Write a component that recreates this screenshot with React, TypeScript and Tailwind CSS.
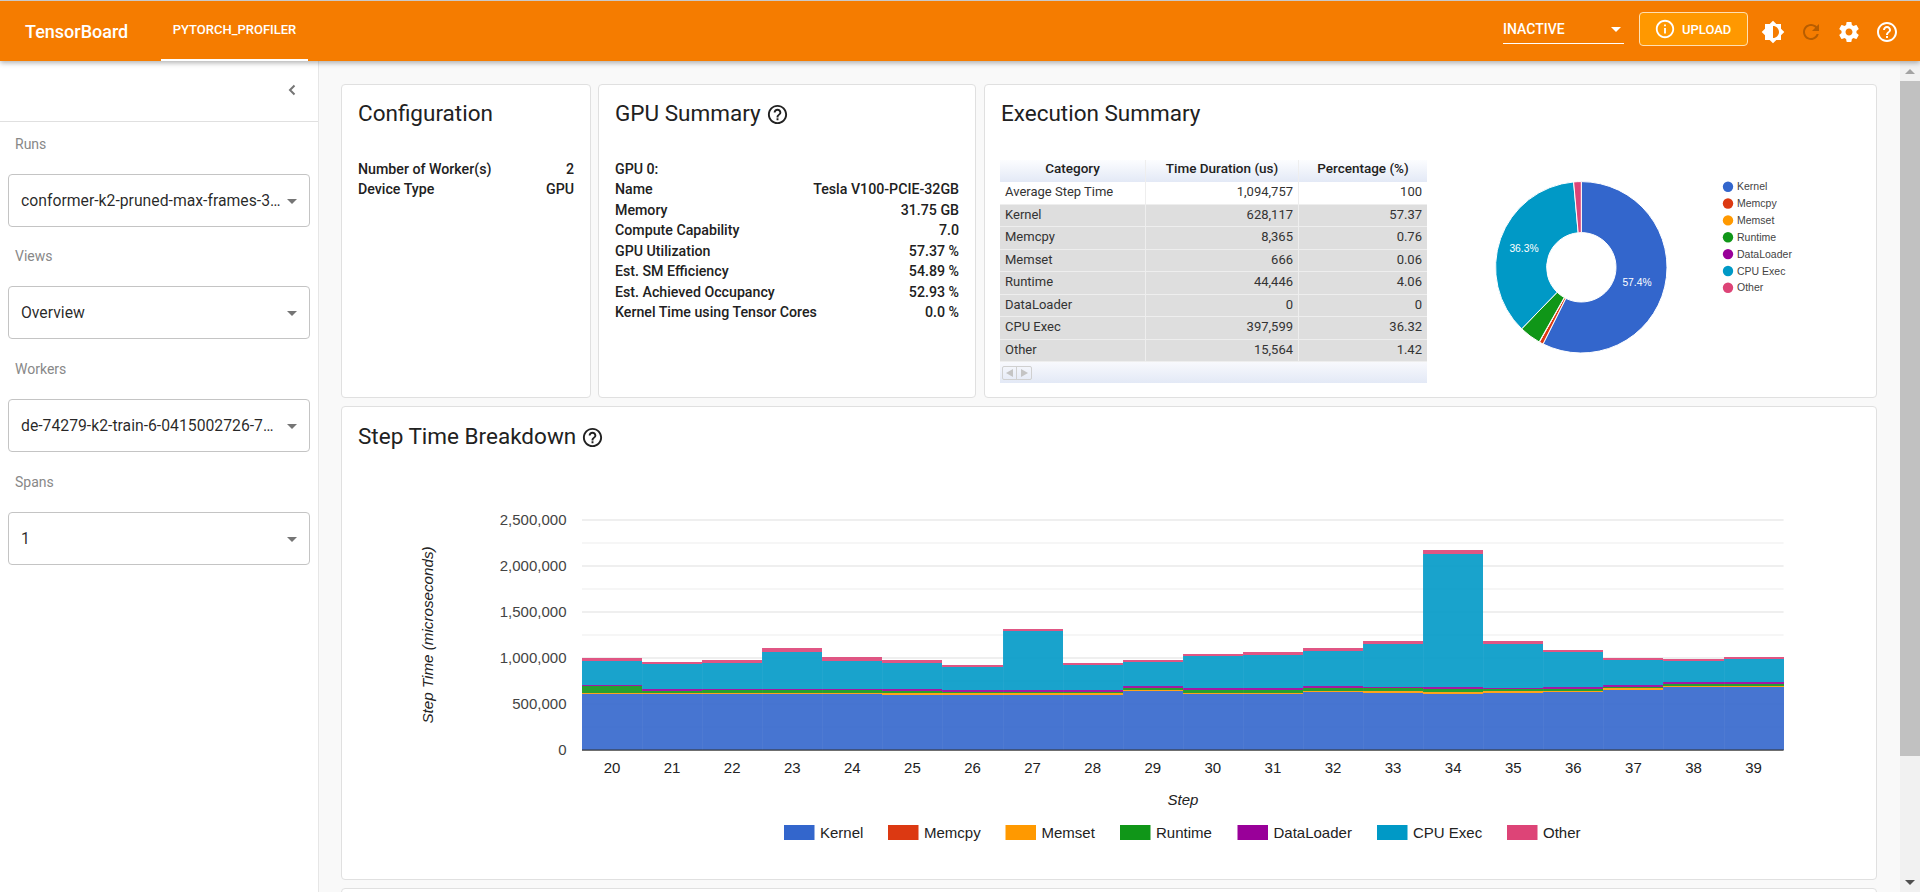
import React from "react";

const roboto = "font-['Roboto',sans-serif]";

const HELP_PATH =
  "M11 18h2v-2h-2v2zm1-16C6.48 2 2 6.48 2 12s4.48 10 10 10 10-4.48 10-10S17.52 2 12 2zm0 18c-4.41 0-8-3.59-8-8s3.59-8 8-8 8 3.59 8 8-3.59 8-8 8zm0-14c-2.21 0-4 1.79-4 4h2c0-1.1.9-2 2-2s2 .9 2 2c0 2-3 1.75-3 5h2c0-2.25 3-2.5 3-5 0-2.21-1.79-4-4-4z";

function MatIcon({ d, className }: { d: string; className?: string }) {
  return (
    <svg viewBox="0 0 24 24" className={className} fill="currentColor">
      <path d={d} />
    </svg>
  );
}

const seriesColors: Record<string, string> = {
  Kernel: "#3366cc",
  Memcpy: "#dc3912",
  Memset: "#ff9900",
  Runtime: "#109618",
  DataLoader: "#990099",
  "CPU Exec": "#0099c6",
  Other: "#dd4477",
};

function Header() {
  return (
    <header className="relative z-10 flex h-[61px] shrink-0 items-stretch border-t border-[#c9c9c9] bg-[#f57c00] text-white shadow-[0_2px_5px_rgba(0,0,0,0.3)]">
      <div className={`${roboto} ml-[25px] flex w-[136px] items-center text-[18px] font-medium`}>
        TensorBoard
      </div>
      <div className={`${roboto} flex w-[147px] items-center justify-center border-b-2 border-white text-[13px] font-medium`}>
        PYTORCH_PROFILER
      </div>
      <div className="ml-auto flex items-start pr-[14px]">
        <div className={`${roboto} relative mr-[15px] mt-[13px] flex h-[30px] w-[121px] items-center border-b border-white pt-[2px] text-[14px] font-medium`}>
          INACTIVE
          <span className="absolute right-[3px] top-[13px] h-0 w-0 border-x-[5px] border-t-[5px] border-x-transparent border-t-white" />
        </div>
        <button className={`${roboto} mt-[11px] flex h-[34px] w-[109px] items-center rounded-[4px] border border-[#ffe0b2] bg-[#ff9800] pl-[14px] text-[13px] font-medium`}>
          <MatIcon
            className="mr-[6px] h-[22px] w-[22px]"
            d="M11 7h2v2h-2zm0 4h2v6h-2zm1-9C6.48 2 2 6.48 2 12s4.48 10 10 10 10-4.48 10-10S17.52 2 12 2zm0 18c-4.41 0-8-3.59-8-8s3.59-8 8-8 8 3.59 8 8-3.59 8-8 8z"
          />
          <span className="pt-[1px]">UPLOAD</span>
        </button>
        <div className="ml-[6px] mt-[19px] flex">
          <div className="flex w-[38px] justify-center">
            <MatIcon
              className="h-6 w-6"
              d="M20 15.31L23.31 12 20 8.69V4h-4.69L12 .69 8.69 4H4v4.69L.69 12 4 15.31V20h4.69L12 23.31 15.31 20H20v-4.69zM12 18V6c3.31 0 6 2.69 6 6s-2.69 6-6 6z"
            />
          </div>
          <div className="flex w-[38px] justify-center text-black/25">
            <MatIcon
              className="h-6 w-6"
              d="M17.65 6.35C16.2 4.9 14.21 4 12 4c-4.42 0-7.99 3.58-7.99 8s3.57 8 7.99 8c3.73 0 6.84-2.55 7.73-6h-2.08c-.82 2.33-3.04 4-5.65 4-3.31 0-6-2.69-6-6s2.69-6 6-6c1.66 0 3.14.69 4.22 1.78L13 11h7V4l-2.35 2.35z"
            />
          </div>
          <div className="flex w-[38px] justify-center">
            <MatIcon
              className="h-6 w-6"
              d="M19.43 12.98c.04-.32.07-.64.07-.98s-.03-.66-.07-.98l2.11-1.65c.19-.15.24-.42.12-.64l-2-3.46c-.12-.22-.39-.3-.61-.22l-2.49 1c-.52-.4-1.08-.73-1.69-.98l-.38-2.65C14.46 2.18 14.25 2 14 2h-4c-.25 0-.46.18-.49.42l-.38 2.65c-.61.25-1.17.59-1.69.98l-2.49-1c-.23-.09-.49 0-.61.22l-2 3.46c-.13.22-.07.49.12.64l2.11 1.65c-.04.32-.07.65-.07.98s.03.66.07.98l-2.11 1.65c-.19.15-.24.42-.12.64l2 3.46c.12.22.39.3.61.22l2.49-1c.52.4 1.08.73 1.69.98l.38 2.65c.03.24.24.42.49.42h4c.25 0 .46-.18.49-.42l.38-2.65c.61-.25 1.17-.59 1.69-.98l2.49 1c.23.09.49 0 .61-.22l2-3.46c.12-.22.07-.49-.12-.64l-2.11-1.65zM12 15.5c-1.93 0-3.5-1.57-3.5-3.5s1.57-3.5 3.5-3.5 3.5 1.57 3.5 3.5-1.57 3.5-3.5 3.5z"
            />
          </div>
          <div className="flex w-[38px] justify-center">
            <MatIcon className="h-6 w-6" d={HELP_PATH} />
          </div>
        </div>
      </div>
    </header>
  );
}

function SelectBox({ label, value }: { label: string; value: string }) {
  return (
    <div className="h-[113px]">
      <div className={`${roboto} flex h-[60px] items-center pl-[7px] text-[14px] text-[#888]`}>{label}</div>
      <div className={`${roboto} relative flex h-[53px] items-center rounded-[4px] border border-[#c4c4c4] pl-[12px] text-[15.75px] text-black/85`}>
        <span className="whitespace-nowrap">{value}</span>
        <span className="absolute right-[12px] top-[24px] h-0 w-0 border-x-[5px] border-t-[5px] border-x-transparent border-t-[#757575]" />
      </div>
    </div>
  );
}

function Sidebar() {
  return (
    <aside className="w-[319px] shrink-0 border-r border-[#e6e6e6] bg-white">
      <div className="flex h-[61px] items-center justify-end border-b border-[#e0e0e0] pr-[20px] pb-[2px] text-[#757575]">
        <svg viewBox="0 0 12 12" className="h-3 w-3" fill="none" stroke="currentColor" strokeWidth="2">
          <path d="M8.5 1.5L4 6l4.5 4.5" />
        </svg>
      </div>
      <div className="-mt-[8px] px-[8px]">
        <SelectBox label="Runs" value="conformer-k2-pruned-max-frames-3…" />
        <div className="-mt-[1px]">
          <SelectBox label="Views" value="Overview" />
        </div>
        <SelectBox label="Workers" value="de-74279-k2-train-6-0415002726-7…" />
        <SelectBox label="Spans" value="1" />
      </div>
    </aside>
  );
}

function Card({ title, help, className, children }: { title: string; help?: boolean; className?: string; children: React.ReactNode }) {
  return (
    <section className={`rounded-[4px] border border-[#e0e0e0] bg-white ${className || ""}`}>
      <h2 className={`${roboto} flex h-[32px] items-center pl-[16px] text-[22.5px] font-normal text-[#212121]`}>
        {title}
        {help && <MatIcon className="ml-[5px] h-[23px] w-[23px] text-[#212121]" d={HELP_PATH} />}
      </h2>
      {children}
    </section>
  );
}

function KV({ k, v }: { k: string; v?: string }) {
  return (
    <div className={`${roboto} flex h-[20.5px] items-center justify-between text-[14.2px] font-medium text-[#212121]`}>
      <span>{k}</span>
      {v && <span>{v}</span>}
    </div>
  );
}

const execRows = [
  ["Average Step Time", "1,094,757", "100"],
  ["Kernel", "628,117", "57.37"],
  ["Memcpy", "8,365", "0.76"],
  ["Memset", "666", "0.06"],
  ["Runtime", "44,446", "4.06"],
  ["DataLoader", "0", "0"],
  ["CPU Exec", "397,599", "36.32"],
  ["Other", "15,564", "1.42"],
];

function ExecTable() {
  return (
    <div className={`${roboto} w-[427px] shrink-0 text-[13px] text-[#333]`}>
      <div className="grid h-[22px] grid-cols-[146px_153px_128px] bg-gradient-to-b from-[#fcfdff] to-[#e3e9f6] text-center text-[13.5px] font-medium text-[#212121]">
        <div className="border-r border-[#eeeeee] leading-[16px]">Category</div>
        <div className="border-r border-[#eeeeee] leading-[16px]">Time Duration (us)</div>
        <div className="leading-[16px]">Percentage (%)</div>
      </div>
      {execRows.map((row, i) => (
        <div
          key={row[0]}
          className={`grid h-[22.5px] grid-cols-[146px_153px_128px] border-b border-[#eeeeee] leading-[20px] ${i === 0 ? "bg-white" : "bg-[#dedede]"}`}
        >
          <div className="border-r border-[#eeeeee] pl-[5px]">{row[0]}</div>
          <div className="border-r border-[#eeeeee] pr-[5px] text-right">{row[1]}</div>
          <div className="pr-[5px] text-right">{row[2]}</div>
        </div>
      ))}
      <div className="flex h-[21px] items-center bg-gradient-to-b from-[#f8f9fd] to-[#e3e9f6] pl-[2px]">
        <div className="flex h-[14px] w-[30px] rounded-[2px] border border-[#d0d0d0]">
          <div className="flex w-1/2 items-center justify-center border-r border-[#d0d0d0]">
            <span className="h-0 w-0 border-y-[4px] border-r-[7px] border-y-transparent border-r-[#c4c4c4]" />
          </div>
          <div className="flex w-1/2 items-center justify-center">
            <span className="h-0 w-0 border-y-[4px] border-l-[7px] border-y-transparent border-l-[#c4c4c4]" />
          </div>
        </div>
      </div>
    </div>
  );
}

const pieData: [string, number][] = [
  ["Kernel", 57.37],
  ["Memcpy", 0.76],
  ["Memset", 0.06],
  ["Runtime", 4.06],
  ["DataLoader", 0],
  ["CPU Exec", 36.32],
  ["Other", 1.43],
];

function Donut() {
  const cx = 1581.3;
  const cy = 267.3;
  const R = 85.7;
  const r = 34.7;
  let acc = 0;
  const pt = (rad: number, pct: number) => {
    const a = (pct / 100) * Math.PI * 2;
    return `${cx + rad * Math.sin(a)} ${cy - rad * Math.cos(a)}`;
  };
  return (
    <svg className="-mt-[10px] shrink-0" width="443" height="240" viewBox="1427 150 443 240">
      {pieData.map(([name, v]) => {
        if (v === 0) return null;
        const from = acc;
        acc += v;
        const large = v > 50 ? 1 : 0;
        const d = `M${pt(R, from)} A${R} ${R} 0 ${large} 1 ${pt(R, acc)} L${pt(r, acc)} A${r} ${r} 0 ${large} 0 ${pt(r, from)} Z`;
        return <path key={name} d={d} fill={seriesColors[name]} stroke="#fff" strokeWidth="1" />;
      })}
      <text x="1637" y="285.5" textAnchor="middle" fontFamily="Liberation Sans" fontSize="10.3" fill="#fff">57.4%</text>
      <text x="1524" y="252" textAnchor="middle" fontFamily="Liberation Sans" fontSize="10.3" fill="#fff">36.3%</text>
      {Object.keys(seriesColors).map((name, i) => {
        const y = 186.7 + i * 16.85;
        return (
          <g key={name}>
            <circle cx="1728" cy={y} r="5.2" fill={seriesColors[name]} />
            <text x="1737" y={y + 3.6} fontFamily="Liberation Sans" fontSize="10.5" fill="#444">{name}</text>
          </g>
        );
      })}
    </svg>
  );
}

// tops of each stacked segment, read off the picture in zoomed pixels (3x from y=490)
const stepRows: number[][] = [
  [20, 612, 609, 589, 584, 513, 505],
  [21, 612, 609, 604, 598, 522, 515],
  [22, 613, 609, 600, 596, 520, 510],
  [23, 613, 609, 600, 596, 485, 474],
  [24, 613, 609, 600, 596, 514, 502],
  [25, 614, 609, 602, 597, 520, 511],
  [26, 614, 610, 606, 600, 532, 525],
  [27, 614, 610, 606, 600, 424, 417],
  [28, 614, 610, 605, 600, 526, 520],
  [29, 603, 599, 593, 587, 517, 510],
  [30, 613, 609, 600, 594, 498, 491],
  [31, 611, 608, 600, 594, 494, 485],
  [32, 606, 603, 594, 588, 483, 474],
  [33, 608, 604, 594, 590, 463, 453],
  [34, 611, 607, 597, 591, 191, 180],
  [35, 609, 604, 598, 594, 461, 454],
  [36, 606, 602, 596, 590, 485, 479],
  [37, 599, 595, 590, 584, 511, 504],
  [38, 592, 587, 581, 577, 513, 506],
  [39, 592, 587, 581, 577, 507, 500],
];

const legendItems = [
  { name: "Kernel", x: 784 },
  { name: "Memcpy", x: 888 },
  { name: "Memset", x: 1005.5 },
  { name: "Runtime", x: 1120 },
  { name: "DataLoader", x: 1237.5 },
  { name: "CPU Exec", x: 1377 },
  { name: "Other", x: 1507 },
];

function StepChart() {
  const x0 = 582;
  const colW = 60.08;
  const right = x0 + colW * 20;
  const zero = 750;
  const Y = (z: number) => Math.round(490 + z / 3);
  const majors = ["0", "500,000", "1,000,000", "1,500,000", "2,000,000", "2,500,000"];
  const segs: [number, number, string][] = [
    [1, 0, "#3366cc"],
    [2, 1, "#ff9900"],
    [3, 2, "#109618"],
    [4, 3, "#990099"],
    [5, 4, "#0099c6"],
    [6, 5, "#dd4477"],
  ];
  return (
    <svg className="mt-[37px] block" width="1534" height="389" viewBox="342 490 1534 389" fontFamily="Liberation Sans">
      {majors.map((label, i) => {
        const y = zero - i * 46;
        return (
          <g key={label}>
            {i > 0 && <rect x={x0} y={y - 0.5} width={right - x0} height="1" fill="#e0e0e0" />}
            {i < 5 && <rect x={x0} y={y - 23.5} width={right - x0} height="1" fill="#eeeeee" />}
            <text x="566.5" y={y + 5} textAnchor="end" fontSize="15" fill="#444">{label}</text>
          </g>
        );
      })}
      {stepRows.map((row, i) => {
        const x = Math.round(x0 + i * colW);
        const w = Math.round(x0 + (i + 1) * colW) - x;
        return (
          <g key={row[0]}>
            {segs.map(([top, bottom, color]) => {
              const yTop = Y(row[top]);
              const yBottom = bottom === 0 ? zero : Y(row[bottom]);
              return <rect key={top} x={x} y={yTop} width={w} height={yBottom - yTop} fill={color} fillOpacity="0.9" />;
            })}
            {i > 0 && <rect x={x} y={Y(row[6])} width="1" height={zero - Y(row[6])} fill="#fff" fillOpacity="0.04" />}
            <text x={x0 + i * colW + colW / 2} y="773" textAnchor="middle" fontSize="15" fill="#222">{row[0]}</text>
          </g>
        );
      })}
      <rect x={x0} y={zero - 0.5} width={right - x0} height="1.2" fill="#333" />
      <text x="1183" y="805" textAnchor="middle" fontSize="15" fontStyle="italic" fill="#222">Step</text>
      <text transform="translate(433 635) rotate(-90)" textAnchor="middle" fontSize="15.2" fontStyle="italic" fill="#222">
        Step Time (microseconds)
      </text>
      {legendItems.map((it) => (
        <g key={it.name}>
          <rect x={it.x} y="825" width="30.5" height="15" fill={seriesColors[it.name]} />
          <text x={it.x + 36} y="838" fontSize="15" fill="#222">{it.name}</text>
        </g>
      ))}
    </svg>
  );
}

export default function App() {
  return (
    <div className="flex h-[892px] w-[1920px] flex-col overflow-hidden bg-[#f9f9f9]">
      <Header />
      <div className="flex min-h-0 flex-1">
        <Sidebar />
        <main className="min-w-0 flex-1 pl-[22px] pr-[23px] pt-[23px]">
          <div className="flex h-[314px]">
            <Card title="Configuration" className="mr-[7px] w-[250px] pt-[13px]">
              <div className="mt-[29px] px-[16px]">
                <KV k="Number of Worker(s)" v="2" />
                <KV k="Device Type" v="GPU" />
              </div>
            </Card>
            <Card title="GPU Summary" help className="mr-[8px] w-[378px] pt-[13px]">
              <div className="mt-[29px] px-[16px]">
                <KV k="GPU 0:" />
                <KV k="Name" v="Tesla V100-PCIE-32GB" />
                <KV k="Memory" v="31.75 GB" />
                <KV k="Compute Capability" v="7.0" />
                <KV k="GPU Utilization" v="57.37 %" />
                <KV k="Est. SM Efficiency" v="54.89 %" />
                <KV k="Est. Achieved Occupancy" v="52.93 %" />
                <KV k="Kernel Time using Tensor Cores" v="0.0 %" />
              </div>
            </Card>
            <Card title="Execution Summary" className="flex-1 pt-[13px]">
              <div className="mt-[30px] flex pl-[15px]">
                <ExecTable />
                <Donut />
              </div>
            </Card>
          </div>
          <Card title="Step Time Breakdown" help className="mt-[8px] h-[474px] pt-[14px]">
            <StepChart />
          </Card>
          <div className="mt-[8px] h-[40px] rounded-[4px] border border-[#e0e0e0] bg-white" />
        </main>
        <div className="flex w-[20px] shrink-0 flex-col items-center bg-[#f1f1f1]">
          <div className="flex h-[20px] w-full items-center justify-center">
            <span className="h-0 w-0 border-x-[5px] border-b-[5px] border-x-transparent border-b-[#a3a3a3]" />
          </div>
          <div className="h-[675px] w-full bg-[#c1c1c1]" />
          <div className="mt-auto flex h-[20px] w-full items-center justify-center">
            <span className="h-0 w-0 border-x-[5px] border-t-[5px] border-x-transparent border-t-[#505050]" />
          </div>
        </div>
      </div>
    </div>
  );
}
